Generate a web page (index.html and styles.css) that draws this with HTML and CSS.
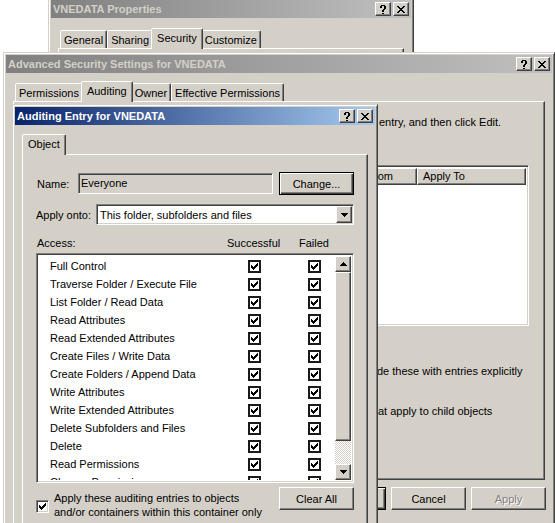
FILE: index.html
```html
<!DOCTYPE html>
<html>
<head>
<meta charset="utf-8">
<title>Auditing Entry for VNEDATA</title>
<link rel="stylesheet" href="styles.css">
</head>
<body>
<svg class="defs" aria-hidden="true">
  <symbol id="i-x" viewBox="0 0 8 7"><path d="M0 0h2v1H0zM6 0h2v1H6zM1 1h2v1H1zM5 1h2v1H5zM2 2h4v1H2zM3 3h2v1H3zM2 4h4v1H2zM1 5h2v1H1zM5 5h2v1H5zM0 6h2v1H0zM6 6h2v1H6z"/></symbol>
  <symbol id="i-q" viewBox="0 0 8 9"><path d="M2 0h4v1H2zM1 1h2v2H1zM5 1h2v3H5zM4 4h2v1H4zM3 5h2v2H3zM3 8h2v1H3z"/></symbol>
  <symbol id="i-ck" viewBox="0 0 7 7"><path d="M0 2h1v3H0zM1 3h1v3H1zM2 4h1v3H2zM3 3h1v3H3zM4 2h1v3H4zM5 1h1v3H5zM6 0h1v3H6z"/></symbol>
  <symbol id="i-up" viewBox="0 0 7 4"><path d="M3 0h1v1H3zM2 1h3v1H2zM1 2h5v1H1zM0 3h7v1H0z"/></symbol>
  <symbol id="i-dn" viewBox="0 0 7 4"><path d="M0 0h7v1H0zM1 1h5v1H1zM2 2h3v1H2zM3 3h1v1H3z"/></symbol>
</svg>

<div class="desk">

  <section class="win w1">
    <div class="title inactive">
      <span class="ttext">VNEDATA Properties</span>
      <span class="tbtns">
        <span class="cbtn raised"><svg class="gq"><use href="#i-q"/></svg></span>
        <span class="cbtn raised"><svg class="gx"><use href="#i-x"/></svg></span>
      </span>
    </div>
    <div class="tabs t1">
      <span class="tab">General</span><span class="tab">Sharing</span><span class="tab sel">Security</span><span class="tab">Customize</span>
    </div>
    <div class="panel p1"></div>
  </section>

  <section class="win w2">
    <div class="title inactive">
      <span class="ttext">Advanced Security Settings for VNEDATA</span>
      <span class="tbtns">
        <span class="cbtn raised"><svg class="gq"><use href="#i-q"/></svg></span>
        <span class="cbtn raised"><svg class="gx"><use href="#i-x"/></svg></span>
      </span>
    </div>
    <div class="tabs t2">
      <span class="tab">Permissions</span><span class="tab sel">Auditing</span><span class="tab">Owner</span><span class="tab">Effective Permissions</span>
    </div>
    <div class="panel p2">
      <p class="frag f1">entry, and then click Edit.</p>
      <div class="lv sunken">
        <div class="lvh">
          <span class="hc raised w-inh"><span class="hct">Inherited From</span></span>
          <span class="hc raised w-app"><span class="hct">Apply To</span></span>
        </div>
      </div>
      <p class="frag f2">de these with entries explicitly</p>
      <p class="frag f3">at apply to child objects</p>
    </div>
    <div class="btnrow">
      <button class="btn def">OK</button>
      <button class="btn">Cancel</button>
      <button class="btn dis">Apply</button>
    </div>
  </section>

  <section class="win w3">
    <div class="title active">
      <span class="ttext">Auditing Entry for VNEDATA</span>
      <span class="tbtns">
        <span class="cbtn raised"><svg class="gq"><use href="#i-q"/></svg></span>
        <span class="cbtn raised"><svg class="gx"><use href="#i-x"/></svg></span>
      </span>
    </div>
    <div class="tabs t3">
      <span class="tab sel">Object</span>
    </div>
    <div class="panel p3">
      <div class="row rname">
        <span class="lbl lname">Name:</span>
        <div class="edit sunken">Everyone</div>
        <button class="btn def bchange">Change...</button>
      </div>
      <div class="row rapply">
        <span class="lbl lapply">Apply onto:</span>
        <div class="combo sunken">
          <span class="ctext">This folder, subfolders and files</span>
          <span class="ddbtn raised"><svg class="ga"><use href="#i-dn"/></svg></span>
        </div>
      </div>
      <div class="acchead"><span class="ah1">Access:</span><span>Successful</span><span>Failed</span></div>
      <div class="acclist sunken">
        <div class="rows">
          <div class="r"><span>Full Control</span><i class="ck"><svg><use href="#i-ck"/></svg></i><i class="ck"><svg><use href="#i-ck"/></svg></i></div>
          <div class="r"><span>Traverse Folder / Execute File</span><i class="ck"><svg><use href="#i-ck"/></svg></i><i class="ck"><svg><use href="#i-ck"/></svg></i></div>
          <div class="r"><span>List Folder / Read Data</span><i class="ck"><svg><use href="#i-ck"/></svg></i><i class="ck"><svg><use href="#i-ck"/></svg></i></div>
          <div class="r"><span>Read Attributes</span><i class="ck"><svg><use href="#i-ck"/></svg></i><i class="ck"><svg><use href="#i-ck"/></svg></i></div>
          <div class="r"><span>Read Extended Attributes</span><i class="ck"><svg><use href="#i-ck"/></svg></i><i class="ck"><svg><use href="#i-ck"/></svg></i></div>
          <div class="r"><span>Create Files / Write Data</span><i class="ck"><svg><use href="#i-ck"/></svg></i><i class="ck"><svg><use href="#i-ck"/></svg></i></div>
          <div class="r"><span>Create Folders / Append Data</span><i class="ck"><svg><use href="#i-ck"/></svg></i><i class="ck"><svg><use href="#i-ck"/></svg></i></div>
          <div class="r"><span>Write Attributes</span><i class="ck"><svg><use href="#i-ck"/></svg></i><i class="ck"><svg><use href="#i-ck"/></svg></i></div>
          <div class="r"><span>Write Extended Attributes</span><i class="ck"><svg><use href="#i-ck"/></svg></i><i class="ck"><svg><use href="#i-ck"/></svg></i></div>
          <div class="r"><span>Delete Subfolders and Files</span><i class="ck"><svg><use href="#i-ck"/></svg></i><i class="ck"><svg><use href="#i-ck"/></svg></i></div>
          <div class="r"><span>Delete</span><i class="ck"><svg><use href="#i-ck"/></svg></i><i class="ck"><svg><use href="#i-ck"/></svg></i></div>
          <div class="r"><span>Read Permissions</span><i class="ck"><svg><use href="#i-ck"/></svg></i><i class="ck"><svg><use href="#i-ck"/></svg></i></div>
          <div class="r"><span>Change Permissions</span><i class="ck"><svg><use href="#i-ck"/></svg></i><i class="ck"><svg><use href="#i-ck"/></svg></i></div>
        </div>
        <div class="sb">
          <span class="sbb raised"><svg class="ga"><use href="#i-up"/></svg></span>
          <span class="thumb raised"></span>
          <span class="track"></span>
          <span class="sbb raised"><svg class="ga"><use href="#i-dn"/></svg></span>
        </div>
      </div>
      <div class="bottom">
        <label class="chk">
          <i class="cb3d"><svg><use href="#i-ck"/></svg></i>
          <span class="chktext">Apply these auditing entries to objects<br>and/or containers within this container only</span>
        </label>
        <button class="btn">Clear All</button>
      </div>
    </div>
  </section>

</div>
</body>
</html>
```

FILE: styles.css
```css
* { box-sizing: border-box; margin: 0; padding: 0; }

html, body {
  width: 555px;
  height: 523px;
  overflow: hidden;
  background: #fff;
}

body {
  font-family: "Liberation Sans", Arial, sans-serif;
  font-size: 11px;
  line-height: 14px;
  color: #000;
}

button { font: inherit; color: inherit; }

.defs { position: absolute; width: 0; height: 0; overflow: hidden; }

svg { display: block; shape-rendering: crispEdges; fill: #000; }

.desk {
  position: relative;
  width: 555px;
  height: 523px;
  overflow: hidden;
}

/* ---------- 3D edges ---------- */
.raised {
  background: #d4d0c8;
  border: 1px solid;
  border-color: #fff #404040 #404040 #fff;
  box-shadow: inset -1px -1px #808080, inset 1px 1px #d4d0c8;
}

.sunken {
  border: 1px solid;
  border-color: #808080 #fff #fff #808080;
  box-shadow: inset 1px 1px #404040, inset -1px -1px #d4d0c8;
}

/* ---------- windows ---------- */
.win {
  position: absolute;
  background: #d4d0c8;
  border: 1px solid;
  border-color: #d4d0c8 #404040 #404040 #d4d0c8;
  box-shadow: inset 1px 1px #fff, inset -1px -1px #808080;
  padding: 2px;
  display: flex;
  flex-direction: column;
}

.w1 { left: 48px; top: -3px; width: 366px; height: 130px; }
.w2 { left: 3px; top: 52px; width: 552px; height: 500px; }
.w3 { left: 12px; top: 104px; width: 366px; height: 470px; }

.title {
  flex: none;
  height: 18px;
  display: flex;
  align-items: center;
  padding-left: 2px;
  font-weight: bold;
  white-space: nowrap;
}

.title.inactive {
  background: linear-gradient(to right, #808080, #c0c0c0);
  color: #d4d0c8;
}

.title.active {
  background: linear-gradient(to right, #0a246a, #a6caf0);
  color: #fff;
}

.ttext { flex: 1; }

.tbtns {
  display: flex;
  gap: 2px;
  margin-right: 2px;
}

.cbtn {
  width: 16px;
  height: 14px;
  display: flex;
  align-items: center;
  justify-content: center;
}

.gx { width: 8px; height: 7px; }
.gq { width: 8px; height: 9px; }
.ga { width: 7px; height: 4px; }

/* ---------- tabs ---------- */
.tabs {
  flex: none;
  position: relative;
  z-index: 1;
  display: flex;
  align-items: flex-end;
  height: 20px;
  margin: 0 7px;
  padding-left: 2px;
}

.t1 { margin-top: 10px; }
.t2 { margin-top: 8px; }
.t3 { margin-top: 9px; }

.tab {
  position: relative;
  height: 18px;
  padding: 0 3px;
  display: flex;
  align-items: center;
  white-space: nowrap;
  background: #d4d0c8;
  border: 1px solid;
  border-bottom: 0;
  border-color: #fff #404040 transparent #fff;
  border-radius: 2px 2px 0 0;
  box-shadow: inset -1px 0 #808080;
}

.tab.sel {
  z-index: 2;
  height: 21px;
  margin: 0 -2px -1px;
  padding: 0 5px 3px;
}

.panel {
  margin: 0 7px;
  border: 1px solid;
  border-color: #fff #404040 #404040 #fff;
  box-shadow: inset -1px -1px #808080;
}

.p1 { flex: 1; }

/* ---------- advanced security window ---------- */
.p2 {
  flex: none;
  height: 379px;
  padding: 13px 15px 0;
  display: flex;
  flex-direction: column;
}

.frag {
  white-space: nowrap;
}

.f1 { margin-left: 350px; }
.f2 { margin-left: 348px; margin-top: 38px; }
.f3 { margin-left: 349px; margin-top: 26px; }

.lv {
  margin: 36px 0 0 343px;
  height: 161px;
  background: #fff;
  padding: 2px;
}

.lvh { display: flex; height: 17px; }

.hc {
  flex: none;
  display: flex;
  line-height: 15px;
  white-space: nowrap;
  overflow: hidden;
}

.hct { flex: none; }

.w-inh { width: 42px; justify-content: flex-end; padding-right: 23px; }
.w-app { flex: 1; padding-left: 5px; }

.btnrow {
  flex: none;
  display: flex;
  justify-content: flex-end;
  gap: 5px;
  margin: 7px 6px 0 0;
}

.btn {
  width: 75px;
  height: 23px;
  background: #d4d0c8;
  border: 1px solid;
  border-color: #fff #404040 #404040 #fff;
  box-shadow: inset -1px -1px #808080, inset 1px 1px #d4d0c8;
  text-align: center;
}

.btn.def {
  border-color: #000;
  box-shadow: inset 1px 1px #fff, inset -1px -1px #404040, inset -2px -2px #808080;
}

.btn.dis {
  color: #808080;
  text-shadow: 1px 1px #fff;
}

/* ---------- auditing entry window ---------- */
.p3 {
  flex: 1;
  padding: 17px 13px 0 13px;
  display: flex;
  flex-direction: column;
}

.row {
  display: flex;
  align-items: center;
}

.rname { height: 23px; }
.rapply { height: 21px; margin-top: 9px; }

.lbl { flex: none; white-space: nowrap; }
.lname { width: 42px; padding-left: 1px; }
.lapply { width: 60px; }

.edit {
  width: 195px;
  height: 21px;
  padding-left: 2px;
  line-height: 19px;
  background: #d4d0c8;
}

.bchange { margin-left: auto; }

.combo {
  flex: 1;
  height: 21px;
  display: flex;
  align-items: center;
  background: #fff;
  padding-left: 3px;
}

.ctext { flex: 1; white-space: nowrap; }

.ddbtn {
  width: 16px;
  height: 17px;
  margin-right: 1px;
  display: flex;
  align-items: center;
  justify-content: center;
}

.acchead {
  margin-top: 11px;
  display: grid;
  grid-template-columns: 191px 72px auto;
  height: 14px;
}

.ah1 { padding-left: 1px; }

.acclist {
  margin-top: 3px;
  height: 230px;
  flex: none;
  display: flex;
  padding: 2px;
  background: #fff;
}

.rows {
  flex: 1;
  overflow: hidden;
  padding-top: 1px;
}

.r {
  display: grid;
  grid-template-columns: 198px 60px 13px;
  align-items: center;
  height: 18px;
  padding-left: 11px;
  white-space: nowrap;
}

.ck {
  width: 13px;
  height: 13px;
  border: 2px solid #1a1a1a;
  background: #fff;
  padding: 1px;
  display: block;
}

.ck svg, .cb3d svg { width: 7px; height: 7px; }

.sb {
  flex: none;
  width: 16px;
  display: flex;
  flex-direction: column;
}

.sbb {
  flex: none;
  height: 16px;
  display: flex;
  align-items: center;
  justify-content: center;
}

.thumb { flex: none; height: 169px; }

.track {
  flex: 1;
  background: repeating-conic-gradient(#fff 0 25%, #d4d0c8 0 50%) 0 0 / 2px 2px;
}

.bottom {
  margin-top: 4px;
  display: flex;
  align-items: flex-start;
  justify-content: space-between;
}

.chk {
  display: flex;
  align-items: flex-start;
  gap: 5px;
  margin-top: 4px;
}

.cb3d {
  flex: none;
  width: 13px;
  height: 13px;
  margin-top: 9px;
  padding: 2px;
  background: #fff;
  border: 1px solid;
  border-color: #808080 #fff #fff #808080;
  box-shadow: inset 1px 1px #404040, inset -1px -1px #d4d0c8;
  display: block;
}

.chktext { white-space: nowrap; }
```
